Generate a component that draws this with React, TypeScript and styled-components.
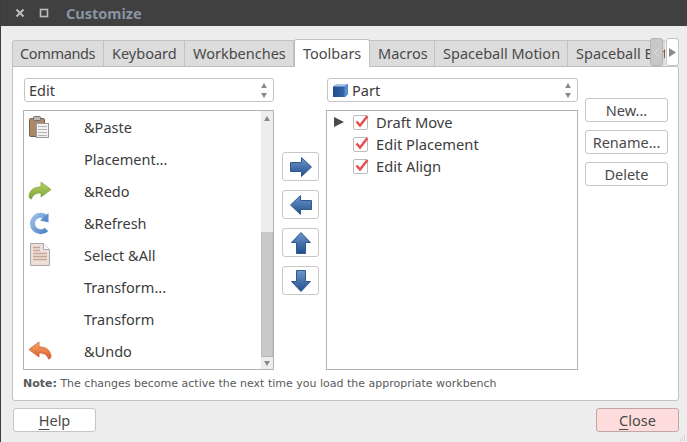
import React from 'react'
import styled, { createGlobalStyle } from 'styled-components'

const Global = createGlobalStyle`
  html, body {
    margin: 0;
    padding: 0;
    background: #ededed;
  }
  body {
    font-family: "Noto Sans", "Open Sans", sans-serif;
    font-size: 14px;
    color: #3c3c3c;
  }
`

const Root = styled.div`
  width: 687px;
  height: 442px;
  display: flex;
  flex-direction: column;
  overflow: hidden;
  box-sizing: border-box;
  border-left: 1px solid #3d3d3d;
  background: #ededed;
  position: relative;
`

const TitleBar = styled.div`
  height: 26px;
  margin-left: -1px;
  background: #404040;
  display: flex;
  align-items: center;
  flex: none;
  padding-left: 15px;
`

const WinButton = styled.span`
  width: 10px;
  display: flex;
  margin-right: 14px;
`

const Title = styled.div`
  margin-left: 3px;
  font-weight: 700;
  font-size: 14.5px;
  color: #8a94a4;
`

const Body = styled.div`
  flex: 1;
  display: flex;
  flex-direction: column;
  padding: 14px 7px 10px 11px;
`

const TabRow = styled.div`
  height: 26px;
  position: relative;
  display: flex;
  z-index: 1;
  width: 667px;
  flex: none;
`

const TabClip = styled.div`
  display: flex;
  width: 653px;
  height: 30px;
  margin-top: -3px;
  padding-top: 3px;
  overflow: hidden;
`

const Tab = styled.div<{ $w: number; $active?: boolean }>`
  width: ${p => p.$w}px;
  flex: none;
  box-sizing: border-box;
  height: ${p => (p.$active ? '28px' : '27px')};
  margin-top: ${p => (p.$active ? '-1px' : '0')};
  padding-left: 8px;
  line-height: ${p => (p.$active ? '26px' : '25px')};
  white-space: nowrap;
  background: ${p => (p.$active ? '#fff' : '#dcdcdc')};
  border: 1px solid #c2c2c2;
  border-left: ${p => (p.$active ? '1px solid #bdbdbd' : 'none')};
  border-bottom: ${p => (p.$active ? 'none' : '1px solid #bdbdbd')};
  border-radius: ${p => (p.$active ? '3px 3px 0 0' : '0')};
  color: #4a4a4a;
  font-size: 14.5px;
  &:first-child {
    border-left: 1px solid #c2c2c2;
    border-radius: 3px 0 0 0;
    padding-left: 7px;
    letter-spacing: -0.35px;
  }
`

const ScrollBtn = styled.div<{ $on?: boolean; $left: number }>`
  position: absolute;
  left: ${p => p.$left}px;
  top: -2px;
  width: 13px;
  height: 28px;
  box-sizing: border-box;
  border: 1px solid ${p => (p.$on ? '#c4c4c4' : '#b4b4b4')};
  border-radius: 3px;
  background: ${p => (p.$on ? '#fff' : '#c8c8c8')};
  display: flex;
  align-items: center;
  justify-content: center;
`

const Pane = styled.div`
  width: 667px;
  height: 335px;
  box-sizing: border-box;
  background: #fff;
  border: 1px solid #c2c2c2;
  border-radius: 0 3px 3px 3px;
  padding: 11px 11px 0 11px;
  display: grid;
  grid-template-columns: 250px 37px 251px 82px;
  grid-template-rows: 24px 260px 1fr;
  column-gap: 8px;
  row-gap: 8px;
  flex: none;
`

const Combo = styled.div`
  box-sizing: border-box;
  height: 24px;
  border: 1px solid #c4c4c4;
  border-radius: 3px;
  background: #fff;
  display: flex;
  align-items: center;
  padding: 0 4px;
  gap: 3px;
  position: relative;
  font-size: 14.5px;
  color: #3c3c3c;
`

const Updown = styled.div`
  margin-left: auto;
  margin-right: 2px;
  display: flex;
  flex-direction: column;
  gap: 5px;
`

const ListBox = styled.div`
  grid-column: 1;
  margin-left: -1px;
  box-sizing: border-box;
  height: 260px;
  width: 251px;
  border: 1px solid #b2b2b2;
  display: flex;
  background: #fff;
`

const Rows = styled.div`
  flex: 1;
`

const Row = styled.div`
  height: 32px;
  display: flex;
  align-items: center;
  font-size: 14.5px;
  color: #3c3c3c;
  padding-left: 4px;
`

const IconSlot = styled.div`
  width: 24px;
  height: 24px;
  flex: none;
  margin-right: 32px;
`

const ScrollTrack = styled.div`
  width: 12px;
  background: #ededed;
  box-sizing: border-box;
  display: flex;
  flex-direction: column;
`

const ScrollArrow = styled.div<{ $h: number }>`
  height: ${p => p.$h}px;
  display: flex;
  justify-content: center;
  align-items: center;
  flex: none;
`

const ScrollThumb = styled.div`
  height: 124px;
  margin-top: auto;
  background: #c9c9c9;
  border-left: 1px solid #bcbcbc;
  border-right: 1px solid #bcbcbc;
  border-bottom: 1px solid #b4b4b4;
`

const ArrowColumn = styled.div`
  display: flex;
  flex-direction: column;
  gap: 9px;
  padding-top: 42px;
`

const ArrowButton = styled.div`
  box-sizing: border-box;
  width: 37px;
  height: 29px;
  border: 1px solid #c8c8c8;
  border-radius: 3px;
  background: #fff;
  display: flex;
  align-items: center;
  justify-content: center;
`

const TreeBox = styled.div`
  box-sizing: border-box;
  margin-left: -1px;
  width: 252px;
  height: 260px;
  border: 1px solid #b2b2b2;
`

const TreeRow = styled.div`
  height: 22px;
  display: flex;
  align-items: center;
  font-size: 14.7px;
  color: #3c3c3c;
`

const Expander = styled.div`
  width: 26px;
  padding-left: 7px;
  box-sizing: border-box;
  display: flex;
`

const Check = styled.div`
  width: 15px;
  height: 15px;
  box-sizing: border-box;
  border: 1px solid #bdbdbd;
  border-radius: 2px;
  margin-right: 8px;
  position: relative;
`

const CheckMark = styled.svg`
  position: absolute;
  left: 0;
  top: -2px;
`

const SideButtons = styled.div`
  grid-row: 1 / span 2;
  grid-column: 4;
  margin-left: -1px;
  padding-top: 20px;
  display: flex;
  flex-direction: column;
  gap: 8px;
`

const PushButton = styled.div<{ $danger?: boolean }>`
  box-sizing: border-box;
  width: 83px;
  height: 24px;
  border: 1px solid ${p => (p.$danger ? '#c0a8a8' : '#c6c6c6')};
  border-radius: 3px;
  background: ${p => (p.$danger ? '#ffdcdc' : '#fff')};
  display: flex;
  align-items: center;
  justify-content: center;
  font-size: 14.5px;
  color: #4a4a4a;
  u {
    text-underline-offset: 3px;
    text-decoration-thickness: 1px;
  }
`

const Note = styled.div`
  grid-column: 1 / span 4;
  margin-top: -1px;
  margin-left: -1px;
  font-family: "DejaVu Sans", sans-serif;
  font-size: 11px;
  color: #5a5a5a;
  white-space: nowrap;
  b {
    font-weight: 700;
  }
`

const Footer = styled.div`
  display: flex;
  justify-content: space-between;
  margin-top: 7px;
  padding-left: 1px;
  width: 667px;
  box-sizing: border-box;
`

const Grip = styled.svg`
  position: absolute;
  right: 1px;
  bottom: 1px;
`

const TABS: [string, number][] = [
  ['Commands', 92],
  ['Keyboard', 81],
  ['Workbenches', 109]
]

const Arrow: React.FC<{ rotate: number }> = ({ rotate }) => (
  <svg width="24" height="24" viewBox="0 0 24 24">
    <defs>
      <linearGradient
        id={`ag${rotate}`}
        x1="0"
        y1="0"
        x2="0"
        y2="1"
        gradientTransform={`rotate(${-rotate} 0.5 0.5)`}
      >
        <stop offset="0" stopColor="#6d97cb" />
        <stop offset="1" stopColor="#234f8e" />
      </linearGradient>
    </defs>
    <path
      transform={`rotate(${rotate} 12 12)`}
      d="M1.500 7.500H12.500V2.500L22.500 12 12.500 21.500V16.500H1.500z"
      fill={`url(#ag${rotate})`}
      stroke="#33598c"
      strokeWidth="1"
      strokeLinejoin="round"
    />
  </svg>
)

const Tri: React.FC<{ up?: boolean }> = ({ up }) => (
  <svg width="6" height="5" viewBox="0 0 6 5">
    <path d={up ? 'M3 0l3 5H0z' : 'M0 0h6L3 5z'} fill="#8a8a8a" />
  </svg>
)

const PasteIcon = () => (
  <svg width="24" height="24" viewBox="0 0 24 24">
    <rect x="1.500" y="3.500" width="15" height="18" rx="1" fill="#a9896a" stroke="#7a6048" />
    <rect x="5.500" y="1.500" width="7" height="4" rx="1" fill="#b9b9b9" stroke="#77705f" />
    <rect x="8.500" y="8.500" width="12" height="14" fill="#f2f2f2" stroke="#9a9a9a" />
    <path d="M10 11.500h9M10 14.500h9M10 17.500h9M10 20.500h9" stroke="#b4b4b4" />
  </svg>
)

const RedoIcon = () => (
  <svg width="24" height="24" viewBox="0 0 24 24">
    <defs>
      <linearGradient id="redo" x1="0" y1="0" x2="0" y2="1">
        <stop offset="0" stopColor="#b8d468" />
        <stop offset="1" stopColor="#7aa532" />
      </linearGradient>
    </defs>
    <path
      d="M1 17C2 10 7 8 13 8V3L23 10.500 13 18V14C8 14 5 15.500 3.500 20 2 20 1 19 1 17z"
      fill="url(#redo)"
      stroke="#86a544"
      strokeWidth="0.8"
      strokeLinejoin="round"
    />
  </svg>
)

const UndoIcon = () => (
  <svg width="24" height="24" viewBox="0 0 24 24">
    <defs>
      <linearGradient id="undo" x1="0" y1="0" x2="0" y2="1">
        <stop offset="0" stopColor="#f5ac66" />
        <stop offset="1" stopColor="#dc5a2c" />
      </linearGradient>
    </defs>
    <path
      d="M23 17C22 10 17 8 11 8V3L1 10.500 11 18V14C16 14 19 15.500 20.500 20 22 20 23 19 23 17z"
      fill="url(#undo)"
      stroke="#cc5c32"
      strokeWidth="0.8"
      strokeLinejoin="round"
    />
  </svg>
)

const RefreshIcon = () => (
  <svg width="24" height="24" viewBox="0 0 24 24">
    <defs>
      <linearGradient id="refresh" x1="0" y1="0" x2="1" y2="1">
        <stop offset="0" stopColor="#9cc0e6" />
        <stop offset="1" stopColor="#4f86c6" />
      </linearGradient>
    </defs>
    <path
      d="M18.500 6.500A8.300 8.300 0 1 0 18.500 18.500"
      fill="none"
      stroke="url(#refresh)"
      strokeWidth="5"
    />
    <path d="M12 9.500l8.500-7.500v9.500z" fill="#5b8fcb" />
  </svg>
)

const SelectAllIcon = () => (
  <svg width="24" height="24" viewBox="0 0 24 24">
    <path d="M2.500 0.500h13l6 6v16h-19z" fill="#eee0d8" stroke="#a9a9a9" />
    <path d="M15.500 0.500v6h6" fill="#fff" stroke="#a9a9a9" />
    <path d="M5 4.500h7M5 7.500h7M5 10.500h14M5 13.500h14M5 16.500h14" stroke="#c8a696" strokeWidth="1.500" />
  </svg>
)

const CubeIcon = () => (
  <svg width="17" height="15" viewBox="0 0 17 15">
    <defs>
      <linearGradient id="cube" x1="0" y1="0" x2="1" y2="0">
        <stop offset="0" stopColor="#1f4c8c" />
        <stop offset="1" stopColor="#3a6fb4" />
      </linearGradient>
    </defs>
    <path d="M1 3.500L5 1h11v10l-3 3H1z" fill="url(#cube)" />
    <path d="M1 3.500L5 1h11l-3.500 2.500z" fill="#a9c4e6" />
    <path d="M12.500 3.500L16 1v10l-3.500 3z" fill="#5b8fd0" />
  </svg>
)

const Checked = () => (
  <Check>
    <CheckMark width="16" height="16" viewBox="0 0 16 16">
      <path d="M2.500 7.500l3.500 4 7.500-9.500" fill="none" stroke="#e8504f" strokeWidth="2.500" />
    </CheckMark>
  </Check>
)

const ITEMS: [string, React.ReactNode][] = [
  ['&Paste', <PasteIcon />],
  ['Placement...', null],
  ['&Redo', <RedoIcon />],
  ['&Refresh', <RefreshIcon />],
  ['Select &All', <SelectAllIcon />],
  ['Transform...', null],
  ['Transform', null],
  ['&Undo', <UndoIcon />]
]

const App: React.FC = () => {
  return (
    <Root>
      <Global />
      <TitleBar>
        <WinButton>
          <svg width="10" height="10" viewBox="0 0 10 10">
            <path d="M1.500 1.500l7 7M8.500 1.500l-7 7" stroke="#bdbdbd" strokeWidth="2" />
          </svg>
        </WinButton>
        <WinButton>
          <svg width="10" height="10" viewBox="0 0 10 10">
            <rect x="1.500" y="1.500" width="7" height="7" fill="none" stroke="#bdbdbd" strokeWidth="1.600" />
          </svg>
        </WinButton>
        <Title>Customize</Title>
      </TitleBar>
      <Body>
        <TabRow>
          <TabClip>
            {TABS.map(([t, w]) => (
              <Tab key={t} $w={w}>
                {t}
              </Tab>
            ))}
            <Tab $w={76} $active>
              Toolbars
            </Tab>
            <Tab $w={65}>Macros</Tab>
            <Tab $w={133}>Spaceball Motion</Tab>
            <Tab $w={120}>Spaceball Buttons</Tab>
          </TabClip>
          <ScrollBtn $left={638}>
            <svg width="7" height="9" viewBox="0 0 7 9">
              <path d="M6 0.500L1 4.500l5 4" fill="none" stroke="#dcdcdc" />
            </svg>
          </ScrollBtn>
          <ScrollBtn $left={654} $on>
            <svg width="7" height="9" viewBox="0 0 7 9">
              <path d="M0 0l7 4.500L0 9z" fill="#8a8a8a" />
            </svg>
          </ScrollBtn>
        </TabRow>
        <Pane>
          <Combo>
            Edit
            <Updown>
              <Tri up />
              <Tri />
            </Updown>
          </Combo>
          <div />
          <Combo>
            <CubeIcon />
            Part
            <Updown>
              <Tri up />
              <Tri />
            </Updown>
          </Combo>
          <SideButtons>
            <PushButton>New...</PushButton>
            <PushButton>Rename...</PushButton>
            <PushButton>Delete</PushButton>
          </SideButtons>
          <ListBox>
            <Rows>
              {ITEMS.map(([label, icon]) => (
                <Row key={label}>
                  <IconSlot>{icon}</IconSlot>
                  {label}
                </Row>
              ))}
            </Rows>
            <ScrollTrack>
              <ScrollArrow $h={14}>
                <Tri up />
              </ScrollArrow>
              <ScrollThumb />
              <ScrollArrow $h={12}>
                <Tri />
              </ScrollArrow>
            </ScrollTrack>
          </ListBox>
          <ArrowColumn>
            <ArrowButton>
              <Arrow rotate={0} />
            </ArrowButton>
            <ArrowButton>
              <Arrow rotate={180} />
            </ArrowButton>
            <ArrowButton>
              <Arrow rotate={270} />
            </ArrowButton>
            <ArrowButton>
              <Arrow rotate={90} />
            </ArrowButton>
          </ArrowColumn>
          <TreeBox>
            <TreeRow>
              <Expander>
                <svg width="10" height="10" viewBox="0 0 10 10">
                  <path d="M0 0l10 5-10 5z" fill="#4a4a4a" />
                </svg>
              </Expander>
              <Checked />
              Draft Move
            </TreeRow>
            <TreeRow>
              <Expander />
              <Checked />
              Edit Placement
            </TreeRow>
            <TreeRow>
              <Expander />
              <Checked />
              Edit Align
            </TreeRow>
          </TreeBox>
          <Note>
            <b>Note:</b> The changes become active the next time you load the appropriate workbench
          </Note>
        </Pane>
        <Footer>
          <PushButton>
            <span>
              <u>H</u>elp
            </span>
          </PushButton>
          <PushButton $danger>
            <span>
              <u>C</u>lose
            </span>
          </PushButton>
        </Footer>
      </Body>
      <Grip width="6" height="6" viewBox="0 0 6 6">
        <path d="M4 1h1M2 3h1M4 3h1M0 5h1M2 5h1M4 5h1" stroke="#bdbdbd" />
      </Grip>
    </Root>
  )
}

export default App
